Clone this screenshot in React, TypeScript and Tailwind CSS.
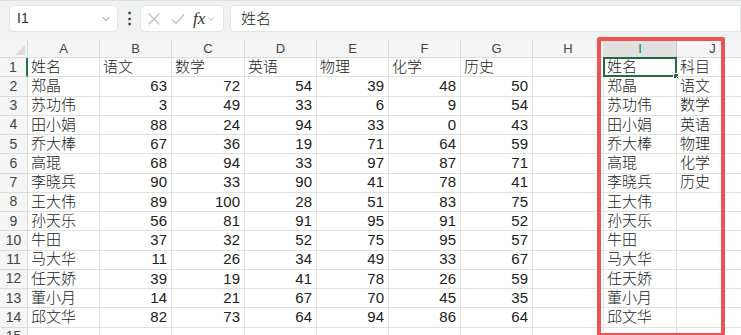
import React from 'react';
import { ChevronDown } from 'lucide-react';

const cols = [
  { k: 'A', w: 'w-[72px]' },
  { k: 'B', w: 'w-[72px]' },
  { k: 'C', w: 'w-[73px]' },
  { k: 'D', w: 'w-[72px]' },
  { k: 'E', w: 'w-[72px]' },
  { k: 'F', w: 'w-[72px]' },
  { k: 'G', w: 'w-[72px]' },
  { k: 'H', w: 'w-[71px]' },
  { k: 'I', w: 'w-[73px]' },
  { k: 'J', w: 'w-[72px]' },
];

const head = ['姓名', '语文', '数学', '英语', '物理', '化学', '历史'];
const data: [string, number, number, number, number, number, number][] = [
  ['郑晶', 63, 72, 54, 39, 48, 50],
  ['苏功伟', 3, 49, 33, 6, 9, 54],
  ['田小娟', 88, 24, 94, 33, 0, 43],
  ['乔大棒', 67, 36, 19, 71, 64, 59],
  ['高琨', 68, 94, 33, 97, 87, 71],
  ['李晓兵', 90, 33, 90, 41, 78, 41],
  ['王大伟', 89, 100, 28, 51, 83, 75],
  ['孙天乐', 56, 81, 91, 95, 91, 52],
  ['牛田', 37, 32, 52, 75, 95, 57],
  ['马大华', 11, 26, 34, 49, 33, 67],
  ['任天娇', 39, 19, 41, 78, 26, 59],
  ['董小月', 14, 21, 67, 70, 45, 35],
  ['邱文华', 82, 73, 64, 94, 86, 64],
];
const subjects = ['科目', '语文', '数学', '英语', '物理', '化学', '历史'];

function buildRows(): (string | number)[][] {
  const rows: (string | number)[][] = [];
  rows.push([...head, '', '姓名', subjects[0]]);
  data.forEach((r, i) => {
    rows.push([...r, '', r[0], subjects[i + 1] ?? '']);
  });
  return rows;
}

export default function App() {
  const rows = buildRows();
  return (
    <div
      className="relative w-[741px] h-[335px] overflow-hidden bg-white text-[#222]"
      style={{ fontFamily: '"Liberation Sans", "Noto Sans CJK SC", sans-serif' }}
    >
      {/* formula bar */}
      <div className="h-[40px] bg-[#eff2f0] border-t border-[#dde1de] flex items-start pt-[4px]">
        <div className="ml-[9px] w-[109px] h-[27px] rounded-[5px] bg-white border border-[#e2e5e3] flex items-center justify-between pl-[7px] pr-[5px]">
          <span className="text-[14px] text-[#333]">I1</span>
          <ChevronDown size={12} strokeWidth={1.5} className="text-[#555]" />
        </div>
        <div className="w-[22px] h-[27px] flex items-center justify-center text-[#333] text-[15px] font-bold">⋮</div>
        <div className="w-[84px] h-[27px] rounded-[5px] bg-white border border-[#e2e5e3] flex items-center pl-[6px]">
          <svg width="14" height="14" viewBox="0 0 14 14" className="mr-[10px]">
            <path d="M1.5 1.5 L12.5 12.5 M12.5 1.5 L1.5 12.5" stroke="#bdbdbd" strokeWidth="1.2" fill="none" />
          </svg>
          <svg width="14" height="14" viewBox="0 0 14 14" className="mr-[8px]">
            <path d="M1 7.5 L5 11.5 L13 2.5" stroke="#bdbdbd" strokeWidth="1.2" fill="none" />
          </svg>
          <span
            className="text-[17px] italic text-[#333] leading-none"
            style={{ fontFamily: '"Liberation Serif", serif' }}
          >
            fx
          </span>
          <ChevronDown size={10} strokeWidth={1.5} className="text-[#888] ml-[1px]" />
        </div>
        <div className="ml-[6px] flex-1 h-[27px] rounded-l-[5px] bg-white border border-[#e2e5e3] flex items-center pl-[10px]">
          <span className="text-[15px] text-[#222] font-light" style={{ fontFamily: '"Noto Sans CJK SC", sans-serif' }}>
            姓名
          </span>
        </div>
      </div>

      {/* column headers */}
      <div className="flex h-[18px] bg-[#f4f5f4]">
        <div className="w-[28px] shrink-0 border-r border-b border-[#d8d8d8] relative">
          <div className="absolute right-[2px] bottom-[2px] w-0 h-0 border-l-[10px] border-l-transparent border-b-[10px] border-b-[#dadada]" />
        </div>
        {cols.map((c) => (
          <div
            key={c.k}
            className={`${c.w} shrink-0 border-r border-b flex items-center justify-center text-[13px] ${
              c.k === 'I'
                ? 'bg-[#e0e0e0] text-[#1f7a45] border-[#c8c8c8]'
                : 'text-[#444] border-[#dcdcdc]'
            }`}
          >
            {c.k}
          </div>
        ))}
      </div>

      {/* rows */}
      {[...rows, []].map((r, ri) => (
        <div key={ri} className="flex h-[19.25px]">
          <div
            className={`w-[28px] shrink-0 bg-[#f4f5f4] border-b border-[#dcdcdc] flex items-center justify-center text-[14px] text-[#444] ${
              ri === 0 ? 'border-r-2 border-r-[#1f7a45]' : 'border-r border-r-[#d8d8d8]'
            }`}
          >
            {ri + 1}
          </div>
          {cols.map((c, ci) => {
            const v = r[ci];
            const num = typeof v === 'number';
            const selected = ri === 0 && c.k === 'I';
            return (
              <div
                key={c.k}
                className={`${c.w} shrink-0 relative border-r border-b border-[#e1e1e1] flex items-center text-[15px] whitespace-nowrap overflow-visible ${
                  num ? 'justify-end pr-[4px]' : 'justify-start pl-[3px] font-light'
                }`}
              >
                {v !== undefined && v !== '' ? String(v) : null}
                {selected && (
                  <div className="absolute -left-px -top-px -right-px -bottom-px border-2 border-[#1f6b40]">
                    <div className="absolute -right-[4px] -bottom-[4px] w-[6px] h-[6px] bg-[#1f6b40] border border-white" />
                  </div>
                )}
              </div>
            );
          })}
        </div>
      ))}

      {/* red highlight box */}
      <div className="absolute left-[597px] top-[37px] w-[128px] h-[300px] border-[4px] border-[#ea5455] rounded-[2px] pointer-events-none" />
    </div>
  );
}
